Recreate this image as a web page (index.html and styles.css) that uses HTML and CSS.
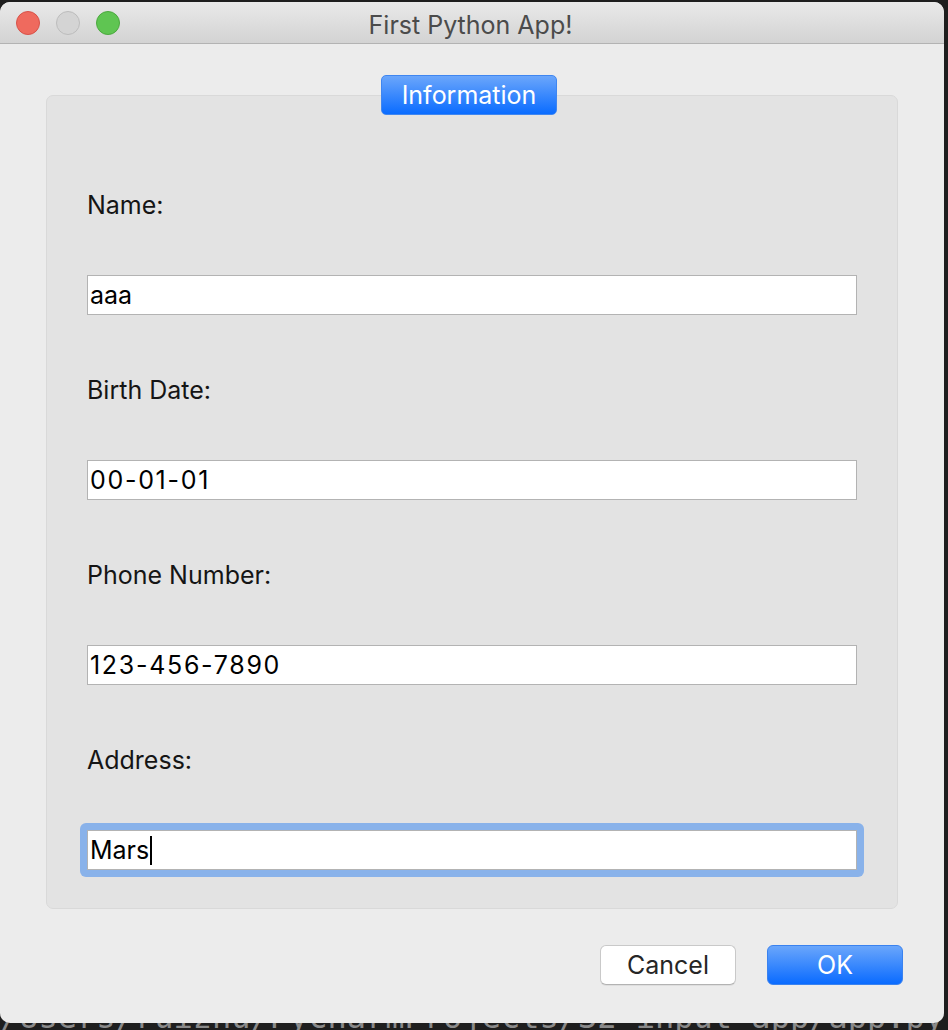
FILE: index.html
```html
<!DOCTYPE html>
<html>
<head>
<meta charset="utf-8">
<link rel="stylesheet" href="styles.css">
</head>
<body>
<div class="window">
  <div class="titlebar">
    <div class="lights">
      <span class="light red"></span>
      <span class="light gray"></span>
      <span class="light green"></span>
    </div>
    <div class="title">First Python App!</div>
  </div>
  <div class="content">
    <div class="group">
      <div class="tab">Information</div>
      <div class="row">
        <div class="label">Name:</div>
        <div class="field">aaa</div>
      </div>
      <div class="row">
        <div class="label">Birth Date:</div>
        <div class="field num">00-01-01</div>
      </div>
      <div class="row">
        <div class="label">Phone Number:</div>
        <div class="field num">123-456-7890</div>
      </div>
      <div class="row">
        <div class="label">Address:</div>
        <div class="focus-ring"><div class="field">Mars<span class="caret"></span></div></div>
      </div>
    </div>
    <div class="buttons">
      <button class="btn cancel">Cancel</button>
      <button class="btn ok">OK</button>
    </div>
  </div>
</div>
<div class="backtext">/Users/ruizhu/PycharmProjects/32_input_app/app.py</div>
</body>
</html>
```
FILE: styles.css
```css
html, body {
  margin: 0;
  padding: 0;
  background: #1e1e1e;
  overflow: hidden;
  height: 1030px;
}
body {
  font-family: "Inter", "Liberation Sans", sans-serif;
}
.window {
  position: relative;
  z-index: 1;
  margin-top: 2px;
  width: 944px;
  height: 1021px;
  background: #ececec;
  border-radius: 10px;
  overflow: hidden;
  display: flex;
  flex-direction: column;
}
.titlebar {
  height: 41px;
  background: linear-gradient(#e9e9e9, #d3d3d3);
  border-bottom: 1px solid #b3b3b3;
  position: relative;
  display: flex;
  align-items: center;
  justify-content: center;
}
.lights {
  position: absolute;
  left: 16px;
  top: 9px;
  display: flex;
  gap: 16px;
}
.light {
  width: 22px;
  height: 22px;
  border-radius: 50%;
  display: block;
}
.red { background: #ef6a5e; border: 1px solid #d75249; }
.gray { background: #d4d4d4; border: 1px solid #bcbcbc; }
.green { background: #5fc552; border: 1px solid #4ca83f; }
.title {
  font-size: 25px;
  color: #4b4b4b;
  margin-top: 5px;
  margin-left: -3px;
}
.content {
  flex: 1;
  display: flex;
  flex-direction: column;
  padding: 51px 0 0 46px;
}
.group {
  position: relative;
  background: #e3e3e3;
  border: 1px solid #d9d9d9;
  border-radius: 7px;
  padding: 94px 0 0 40px;
  display: flex;
  flex-direction: column;
  gap: 60px;
  height: 718px;
  width: 810px;
}
.tab {
  position: absolute;
  top: -21px;
  left: 334px;
  width: 176px;
  height: 40px;
  box-sizing: border-box;
  border-radius: 5px;
  background: linear-gradient(#6ba6fb, #0a6cff);
  border: 1px solid #3f86f0;
  color: #fff;
  font-size: 25px;
  display: flex;
  align-items: center;
  justify-content: center;
}
.row {
  display: flex;
  flex-direction: column;
  gap: 55px;
}
.label {
  font-size: 25px;
  line-height: 30px;
  color: #151515;
  height: 30px;
}
.field {
  width: 770px;
  height: 40px;
  box-sizing: border-box;
  background: #fff;
  border: 1px solid #b3b3b3;
  font-size: 25px;
  line-height: 38px;
  padding-left: 2px;
  color: #000;
  display: flex;
  align-items: center;
}
.num {
  letter-spacing: 1.7px;
}
.focus-ring {
  margin: -7px 0 -7px -7px;
  padding: 7px;
  width: 770px;
  background: #89b2ea;
  border-radius: 6px;
}
.caret {
  display: inline-block;
  width: 2px;
  height: 29px;
  background: #000;
  margin-left: 1px;
}
.buttons {
  display: flex;
  justify-content: flex-end;
  gap: 31px;
  padding: 36px 41px 0 0;
}
.btn {
  width: 136px;
  height: 40px;
  font-family: "Inter", "Liberation Sans", sans-serif;
  font-size: 25px;
  border-radius: 6px;
  padding: 0;
}
.cancel {
  background: #fff;
  border: 1px solid #c9c9c9;
  border-bottom-color: #b3b3b3;
  color: #262626;
  box-shadow: 0 1px 0 rgba(0,0,0,0.06);
}
.ok {
  background: linear-gradient(#6aa6fb, #0a6bff);
  border: 1px solid #3a82ef;
  color: #fff;
}
.backtext {
  position: relative;
  font-family: "DejaVu Sans Mono", monospace;
  font-size: 32px;
  line-height: 32px;
  color: #8a8a8a;
  margin-top: -22px;
  padding-left: 0;
  white-space: nowrap;
}
```
